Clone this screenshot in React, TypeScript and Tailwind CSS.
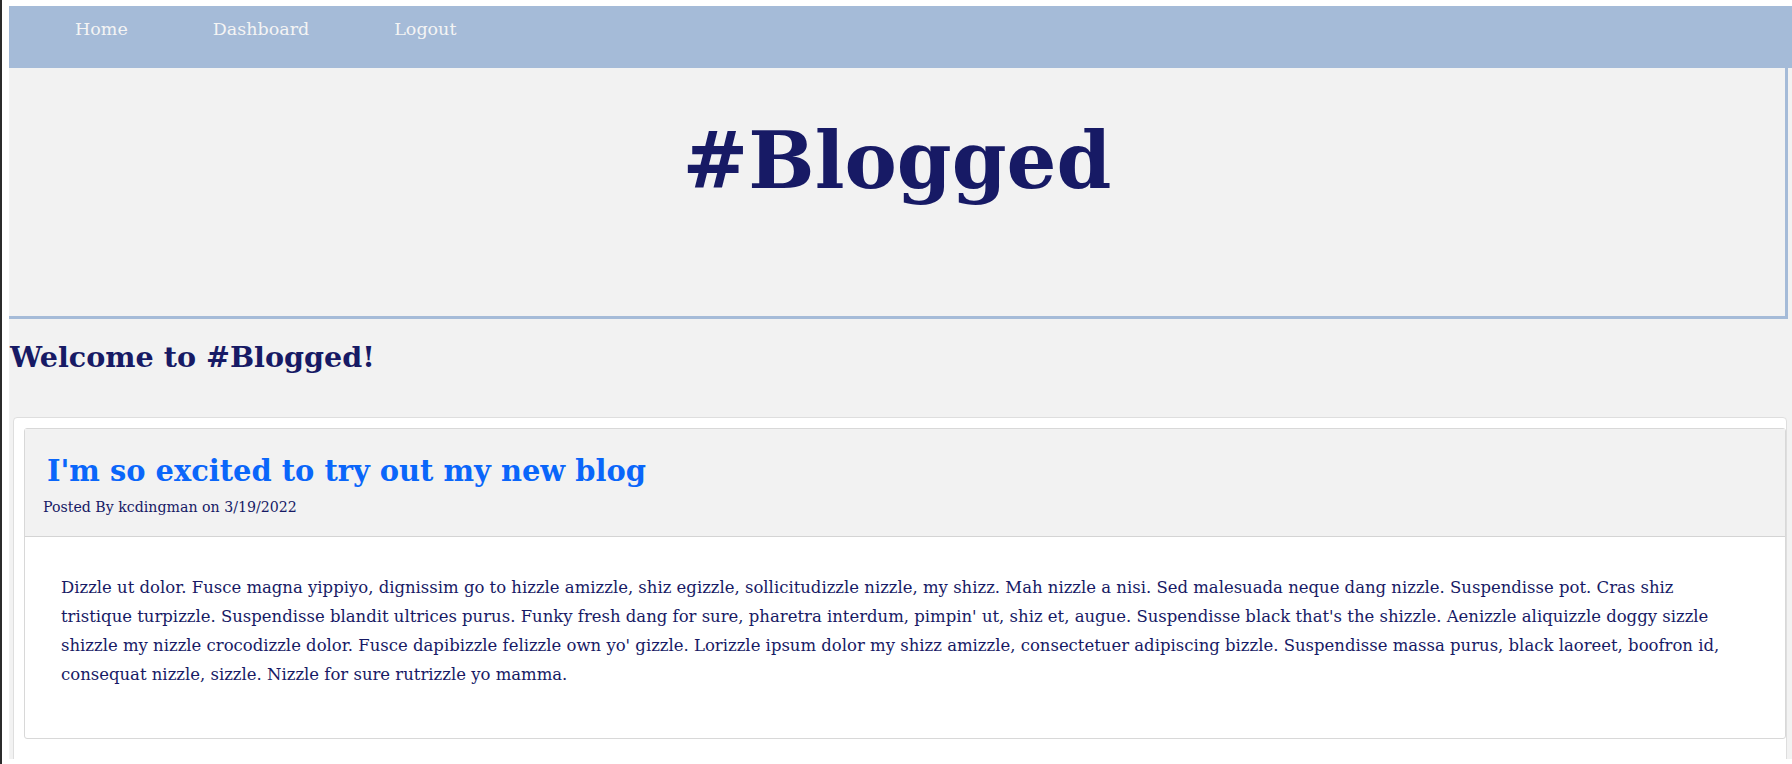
import React from "react";

const body =
  "Dizzle ut dolor. Fusce magna yippiyo, dignissim go to hizzle amizzle, shiz egizzle, sollicitudizzle nizzle, my shizz. Mah nizzle a nisi. Sed malesuada neque dang nizzle. Suspendisse pot. Cras shiz tristique turpizzle. Suspendisse blandit ultrices purus. Funky fresh dang for sure, pharetra interdum, pimpin' ut, shiz et, augue. Suspendisse black that's the shizzle. Aenizzle aliquizzle doggy sizzle shizzle my nizzle crocodizzle dolor. Fusce dapibizzle felizzle own yo' gizzle. Lorizzle ipsum dolor my shizz amizzle, consectetuer adipiscing bizzle. Suspendisse massa purus, black laoreet, boofron id, consequat nizzle, sizzle. Nizzle for sure rutrizzle yo mamma.";

export default function App() {
  return (
    <div className="h-screen w-full overflow-hidden bg-white border-l-2 border-[#2b2b2b] pl-[7px] pt-[6px] font-['DejaVu_Serif',Georgia,serif] text-[#171a65]">
      <div className="h-[753px] overflow-hidden bg-[#f2f2f2]">
        <nav className="flex h-[62px] items-start gap-[85px] bg-[#a5bbd8] pl-[66px] pt-[13px]">
          <a className="text-[17.5px] leading-[20px] text-[#f4f4f4]">Home</a>
          <a className="text-[17.5px] leading-[20px] text-[#f4f4f4]">Dashboard</a>
          <a className="text-[17.5px] leading-[20px] text-[#f4f4f4]">Logout</a>
        </nav>

        <header className="mr-[4px] flex h-[251px] justify-center border-b-[3px] border-r-[3px] border-[#a5bbd8] pt-[54px]">
          <h1 className="text-[78.5px] font-bold leading-none">#Blogged</h1>
        </header>

        <h2 className="ml-[1px] mt-[24px] text-[28.6px] font-bold leading-none">
          Welcome to #Blogged!
        </h2>

        <section className="ml-[4px] mr-[5px] mt-[45px] rounded-[4px] border border-[#dedede] bg-white pb-[40px] pl-[10px] pt-[10px]">
          <article className="rounded-[3px] border border-[#d8d8d8]">
            <div className="border-b border-[#d4d4d4] bg-[#f2f2f2] pb-[22px] pl-[22px] pt-[28px]">
              <h3 className="text-[28.9px] font-bold leading-none text-[#0a66fa]">
                I'm so excited to try out my new blog
              </h3>
              <p className="-ml-[4px] mt-[14px] text-[14.17px] leading-none">
                Posted By kcdingman on 3/19/2022
              </p>
            </div>
            <div className="px-[36px] pb-[49px] pt-[36px]">
              <p className="text-[16.48px] leading-[29px]">{body}</p>
            </div>
          </article>
        </section>
      </div>
    </div>
  );
}
